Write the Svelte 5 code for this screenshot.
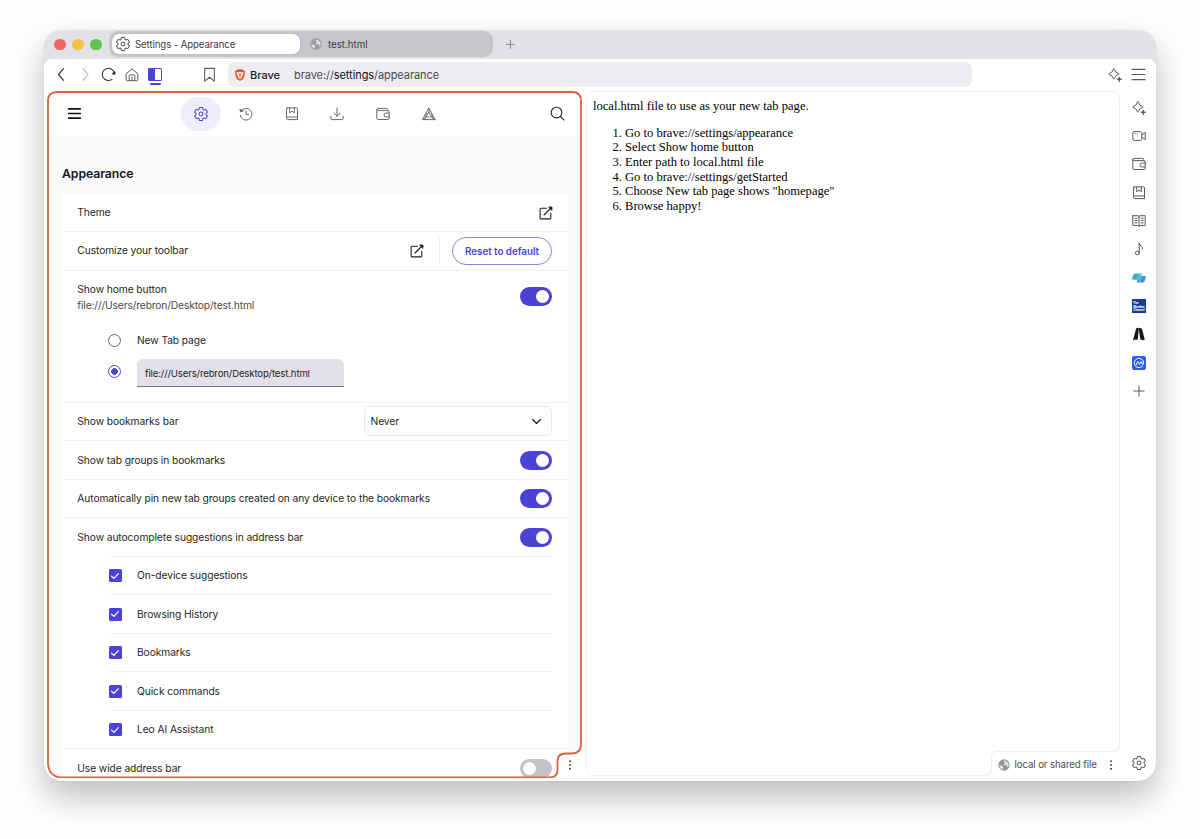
<script>
  const gear = 'M9.594 3.94c.09-.542.56-.94 1.11-.94h2.593c.55 0 1.02.398 1.11.94l.213 1.281c.063.374.313.686.645.87.074.04.147.083.22.127.325.196.72.257 1.075.124l1.217-.456a1.125 1.125 0 0 1 1.37.49l1.296 2.247a1.125 1.125 0 0 1-.26 1.431l-1.003.827c-.293.241-.438.613-.43.992a7.723 7.723 0 0 1 0 .255c-.008.378.137.75.43.991l1.004.827c.424.35.534.955.26 1.43l-1.298 2.247a1.125 1.125 0 0 1-1.369.491l-1.217-.456c-.355-.133-.75-.072-1.076.124a6.47 6.47 0 0 1-.22.128c-.331.183-.581.495-.644.869l-.213 1.281c-.09.543-.56.94-1.11.94h-2.594c-.55 0-1.019-.398-1.11-.94l-.213-1.281c-.062-.374-.312-.686-.644-.87a6.52 6.52 0 0 1-.22-.127c-.325-.196-.72-.257-1.076-.124l-1.217.456a1.125 1.125 0 0 1-1.369-.49l-1.297-2.247a1.125 1.125 0 0 1 .26-1.431l1.004-.827c.292-.24.437-.613.43-.991a6.932 6.932 0 0 1 0-.255c.007-.38-.138-.751-.43-.992l-1.004-.827a1.125 1.125 0 0 1-.26-1.43l1.297-2.247a1.125 1.125 0 0 1 1.37-.491l1.216.456c.356.133.751.072 1.076-.124.072-.044.146-.086.22-.128.332-.183.582-.495.644-.869l.214-1.28Z';
  const navItems = ['gear', 'history', 'book', 'download', 'wallet', 'rewards'];
  const sideItems = ['sparkle', 'video', 'wallet', 'book', 'reader', 'note', 'translate', 'weather', 'road', 'coin', 'plus'];
  const suggestions = ['On-device suggestions', 'Browsing History', 'Bookmarks', 'Quick commands', 'Leo AI Assistant'];
  const groupRows = [
    'Show tab groups in bookmarks',
    'Automatically pin new tab groups created on any device to the bookmarks',
    'Show autocomplete suggestions in address bar'
  ];
  const steps = [
    'Go to brave://settings/appearance',
    'Select Show home button',
    'Enter path to local.html file',
    'Go to brave://settings/getStarted',
    'Choose New tab page shows "homepage"',
    'Browse happy!'
  ];
</script>

{#snippet icon(name, size = 14)}
  <svg class="icon" width={size} height={size} viewBox="0 0 14 14" fill="none" stroke="currentColor" stroke-width="1" stroke-linecap="round" stroke-linejoin="round">
    {#if name === 'gear'}
      <g transform="translate(7 7) scale(.73) translate(-12 -12)" stroke-width="1.4"><path d={gear} /><circle cx="12" cy="12" r="2.600" /></g>
    {:else if name === 'history'}
      <path d="M2 4.200A5.900 5.900 0 1 1 1.200 8" /><path d="M7 4v3.400h2.600" /><path d="M1 2.500 1.500 4.800l2.300-.5Z" fill="currentColor" />
    {:else if name === 'book'}
      <path d="M2.200.9h9.600q.7 0 .7.7v11H2.700q-1.200 0-1.200-1.200V1.600q0-.7.7-.7Z" /><path d="M1.600 11q.2-1 1.200-1h9.600" /><path d="M4.700 1v4.800L7 4.200l2.300 1.600V1" />
    {:else if name === 'download'}
      <path d="M7 1v8M3.900 6.100 7 9.200l3.100-3.100M.8 9.300v2q0 1.300 1.300 1.300h9.800q1.300 0 1.300-1.300v-2" />
    {:else if name === 'wallet'}
      <path d="M11.600 3.600V2.400q0-1-1-1H2Q.8 1.400.8 2.600v8.600q0 1.300 1.300 1.300h9.800q1.300 0 1.300-1.300V5q0-1.400-1.300-1.400H2.200Q.8 3.600.8 2.500" /><path d="M13 6.100H9.600q-1.600 0-1.600 1.900t1.600 1.900H13" />
    {:else if name === 'rewards'}
      <path d="M7 1.500 13.200 12.600H.8Z" /><path d="M7 5.400 9.600 10H4.400ZM7 1.500v3.900M.9 12.500 4.400 10M13.100 12.500 9.600 10M4.600 6.500 2.700 12.500M9.400 6.500l1.900 6" stroke-width=".8" />
    {:else if name === 'sparkle'}
      <path d="M5.900.9q.5 0 .6.6.6 3.200 3.900 3.900.7.1.7.6t-.7.6Q7.100 7.300 6.500 10.500q-.1.6-.6.6t-.6-.6Q4.700 7.300 1.400 6.600.7 6.500.7 6t.7-.6Q4.700 4.700 5.300 1.500 5.400.9 5.900.9Z" /><path d="M11.300 9.400v3.800M9.400 11.300h3.800" stroke-width="1.500" />
    {:else if name === 'video'}
      <path d="M2.200 2.600h6.200q1.400 0 1.400 1.400v6q0 1.400-1.400 1.400H2.200Q.8 11.400.8 10V4Q.8 2.600 2.200 2.600ZM10 5.800l3.200-2.400v7.200L10 8.200" /><path d="M3.200 4.900h.3M5.300 4.900h.3" />
    {:else if name === 'reader'}
      <path d="M7 2.200v10M1.200 1.700h4.600Q7 1.700 7 2.700q0-1 1.200-1h5v9.800H8.200Q7 11.500 7 12.500q0-1-1.200-1H.8V1.700ZM2.800 4.200h2.300M2.800 6.500h2.300M2.800 8.800h2.300M9 4.200h2.300M9 6.500h2.300M9 8.800h2.300" />
    {:else if name === 'note'}
      <circle cx="5.300" cy="10.900" r="1.900" /><path d="M7.200 10.900V1q.2 2.300 2.100 3.100 1.900 1 1 3.100" />
    {:else if name === 'translate'}
      <path d="M3.400 2.400h6.500L8.200 8.800h-7Q-.1 8.800.2 7.300L1.200 4q.5-1.600 2.200-1.600Z" fill="#36b0ca" stroke="none" /><path d="M6.400 5h6.200q1.500 0 1.100 1.400l-1 3.500q-.5 1.600-2 1.600h-6Z" fill="#3c91d8" stroke="none" /><path d="m8.800 3-1.500 5-1.800.2L7 3.200ZM7 5.600h2.600L8 10.900" stroke="#a8dfdc" stroke-width=".5" />
    {:else if name === 'weather'}
      <rect width="14" height="14" fill="#173c96" stroke="none" />
      <g fill="#fff" stroke="none" font-family="Liberation Sans" font-weight="700" font-size="3.300"><text x="1" y="4.800">The</text><text x="1" y="8.600" textLength="11.500">Weather</text><text x="1" y="12.200" textLength="11.500">Channel</text></g>
    {:else if name === 'road'}
      <path d="M4.200 1.200 6.800.7 5.900 12.200 4.500 13l-.4-1-.7 1.200-.8-.9-.7 1H1Z" fill="#171717" stroke="none" /><path d="M6.500.7 9.800 1.500l3 11.100-2.300.8-.5-1-1.500.6Z" fill="#171717" stroke="none" />
    {:else if name === 'coin'}
      <rect width="14" height="14" rx="2.200" fill="#2d59ed" stroke="none" /><path d="M10.800 9.800A4.700 4.700 0 1 1 11.700 7q-.1 1.600-1 1.600-.8 0-.8-1.400 0-1.700-.7-1.700-.5 0-1 1.400L7.500 8.400 6.800 6.700q-.4-1.200-.8-1.200-.5 0-1 1.500L4.300 8.700" stroke="#fff" stroke-width="1" />
    {:else if name === 'plus'}
      <path d="M7 1.800v10.400M1.800 7h10.400" />
    {:else if name === 'menu'}
      <path d="M.9 2.200h12.200M.9 7h12.200M.9 11.800h12.200" />
    {:else if name === 'burger'}
      <path d="M1 2.700h12M1 7h12M1 11.300h12" stroke-width="1.600" stroke-linecap="butt" />
    {:else if name === 'search'}
      <circle cx="6.100" cy="6.100" r="5" /><path d="m9.800 9.800 3.300 3.300" />
    {:else if name === 'back'}
      <path d="M8.900 1.600 4.200 7l4.700 5.400" stroke-width="1.100" />
    {:else if name === 'forward'}
      <path d="m4.700 1.600 4.700 5.400-4.700 5.400" />
    {:else if name === 'reload'}
      <path d="M10.200 11.600A5.700 5.700 0 1 1 12.500 5.600" /><path d="M13 4.500v2.300l-2.300-.6Z" fill="currentColor" />
    {:else if name === 'home'}
      <path d="M1.200 5.600 7 1l5.800 4.600v6q0 1.100-1.100 1.100H2.300q-1.100 0-1.100-1.100ZM4.200 12.600V8.100q0-1.300 1.300-1.300h3q1.300 0 1.300 1.300v4.500M7 9v3.500" />
    {:else if name === 'bookmark'}
      <path d="M2.500 1.300h9v11.900L7 9.600l-4.500 3.600Z" />
    {:else if name === 'external'}
      <path d="M7.500 2.200H2.100q-1 0-1 1v8.700q0 1 1 1h8.700q1 0 1-1V7.300M5 9l7-7" stroke-width="1.100" /><path d="M9.800 1H13v3.200Z" fill="currentColor" stroke-width=".7" />
    {:else if name === 'chevron'}
      <path d="m3.400 5.200 3.600 3.600 3.600-3.600" stroke-width="1.200" />
    {:else if name === 'dots'}
      <path d="M7 2.600v.01M7 7v.01M7 11.400v.01" stroke-width="1.900" stroke-linecap="square" />
    {:else if name === 'check'}
      <path d="m3 7.300 2.700 2.500 5.300-5.500" stroke="#fff" stroke-width="1.400" />
    {:else if name === 'lion'}
      <path d="m4.300.4-1 1.100-1.200-.1L.9 3l.5 1.400-.3 1.400 1.700 5.500L7 13.900l4.200-2.600 1.700-5.500-.3-1.400.5-1.400-1.200-1.600-1.200.1-1-1.100Z" fill="#ed5533" stroke="none" /><path d="m3.300 3.600 2.200.3L7 3.600l1.500.3 2.200-.3.5 1.900-1.700 2.600.2 1.300L7 11.700l-2.700-2.300.2-1.300-1.700-2.600Z" fill="#fff" stroke="none" /><path d="m4.600 5.300 1.700.6L7 8.600l.7-2.700 1.700-.6M5.700 9.400 7 8.700l1.300.7" stroke="#ed5533" stroke-width=".9" />
    {:else if name === 'globe'}
      <circle cx="7" cy="7" r="6.600" fill="#929599" stroke="none" /><path d="M7.800 1.600q-1.500.7-1.200 1.900 1.700.1 1.500 1.500-1.700.5-1.500 2.200l3.200.2q1.300.7.6 2.200l2-.8q.9-4.900-4.600-7ZM1.500 7.300q2.200-.2 2.900 1 1.900 0 1.900 1.300-1.300.8-.9 2.700-3.500-1.200-3.900-5Z" fill="#e3e4e6" stroke="none" />
    {/if}
  </svg>
{/snippet}

<div class="window">
  <header class="tabs">
    <span class="light red"></span><span class="light yellow"></span><span class="light green"></span>
    <div class="group">
      <div class="tab active">{@render icon('gear', 14)}<span>Settings - Appearance</span></div>
      <div class="tab second">{@render icon('globe', 12)}<span>test.html</span></div>
    </div>
    <span class="new">{@render icon('plus', 11)}</span>
  </header>

  <div class="toolbar">
    <div class="buttons">
      <span class="dark">{@render icon('back', 15)}</span>
      <span class="dim">{@render icon('forward', 15)}</span>
      <span class="dark">{@render icon('reload', 15)}</span>
      <span>{@render icon('home', 14)}</span>
      <span class="split"><i></i></span>
    </div>
    <span class="mark">{@render icon('bookmark', 15)}</span>
    <div class="address">{@render icon('lion', 12)}<b>Brave</b><span class="url">brave://<em>settings</em>/appearance</span></div>
    <div class="right">{@render icon('sparkle', 14)}{@render icon('menu', 15)}</div>
  </div>

  <div class="content">
    <section class="settings">
      <nav>
        <span class="burger">{@render icon('burger', 15)}</span>
        <div class="nav-items">
          {#each navItems as n, i}<span class:selected={i === 0}>{@render icon(n, 14)}</span>{/each}
        </div>
        <span class="find">{@render icon('search', 15)}</span>
      </nav>
      <h1>Appearance</h1>
      <div class="card">
        <div class="row"><span>Theme</span>{@render icon('external', 14)}</div>
        <div class="row custom"><span>Customize your toolbar</span>{@render icon('external', 14)}<div class="reset"><button>Reset to default</button></div></div>
        <div class="home">
          <div class="home-top">
            <div><p>Show home button</p><p class="sub">file:///Users/rebron/Desktop/test.html</p></div>
            <span class="toggle"></span>
          </div>
          <div class="option"><span class="radio"></span><span>New Tab page</span></div>
          <div class="option file"><span class="radio on"></span><span class="input">file:///Users/rebron/Desktop/test.html</span></div>
        </div>
        <div class="row bar"><span>Show bookmarks bar</span><div class="select"><span>Never</span>{@render icon('chevron', 15)}</div></div>
        {#each groupRows as r}<div class="row"><span>{r}</span><span class="toggle"></span></div>{/each}
        <div class="checks">
          {#each suggestions as s}<div class="row check"><span class="box">{@render icon('check', 12)}</span><span>{s}</span></div>{/each}
        </div>
        <div class="row"><span>Use wide address bar</span><span class="toggle off"></span></div>
      </div>
      <span class="notch">{@render icon('dots', 12)}</span>
      <svg class="outline" width="536" height="688" viewBox="0 0 536 688" fill="none"><path d="M0 0H536V688H0ZM10 1Q1 1 1 10V671Q1 686.500 16 686.500H502Q510.500 686.500 510.500 679V670Q510.500 662.500 518.500 662.500H525Q534 662.500 534 653V10Q534 1 525 1Z" fill="#fff" /><path d="M10 1H525Q534 1 534 10V653Q534 662.500 525 662.500H518.500Q510.500 662.500 510.500 670V679Q510.500 686.500 502 686.500H16Q1 686.500 1 671V10Q1 1 10 1Z" stroke="#d2643f" stroke-width="1.800" /></svg>
    </section>

    <section class="page">
      <p>local.html file to use as your new tab page.</p>
      <ol>{#each steps as s}<li>{s}</li>{/each}</ol>
      <svg class="frame" width="535" height="687" viewBox="0 0 535 687" fill="none"><path d="M7 .5H526Q533.500.5 533.500 7V654Q533.500 660.500 526 660.500H411Q405.500 660.500 405.500 667V678Q405.500 684.500 399 684.500H7Q.5 684.500.5 678V7Q.5.5 7 .5Z" stroke="#f0eff2" /></svg>
      <div class="origin">{@render icon('globe', 12)}<span>local or shared file</span>{@render icon('dots', 12)}</div>
    </section>

    <aside>
      {#each sideItems as s}<span>{@render icon(s, 14)}</span>{/each}
      <span class="side-gear">{@render icon('gear', 14)}</span>
    </aside>
  </div>
</div>

<style>
  :global(body) { background: #fefefe; }
  :global(#app) { display: flow-root; height: 839px; overflow: hidden; }
  * { box-sizing: border-box; }
  p, h1, ol { margin: 0; }
  .icon { display: block; flex: none; }
  .window {
    width: 1112px; height: 751px; margin: 30px 44px 0; overflow: hidden;
    border-radius: 18px; background: #fff; color: #1e1f23;
    font: 10.250px/15px Inter, sans-serif; letter-spacing: -.090px;
    box-shadow: 0 0 1px rgba(0,0,0,.25), 0 16px 32px rgba(0,0,0,.25);
    display: flex; flex-direction: column;
  }
  .tabs { height: 36px; margin-bottom: -7px; background: #e2e1e6; display: flex; align-items: flex-start; padding-left: 10px; flex: none; }
  .light { width: 11.500px; height: 11.500px; border-radius: 50%; margin: 8.500px 6.500px 0 0; }
  .red { background: #ec6765; } .yellow { background: #eec644; } .green { background: #61c354; }
  .group { display: flex; width: 384px; height: 26px; margin-top: 1px; margin-left: 1px; background: #c6c5cb; border-radius: 9px; padding: 3px 2px 3px 3px; }
  .tab { width: 191px; display: flex; align-items: center; gap: 5px; padding-left: 8px; font-size: 9.650px; color: #3b3c42; }
  .tab .icon { color: #55565e; }
  .tab.active { width: 188px; padding-left: 4px; background: #fff; border-radius: 7px; box-shadow: 0 0 1px #888; }
  .tab.second { padding-left: 10px; gap: 6px; letter-spacing: .03px; }
  .tab.second .icon { opacity: .8; }
  .new { margin: 9px 0 0 12px; color: #777880; }
  .toolbar { position: relative; height: 32px; flex: none; display: flex; align-items: center; background: #fff; border-radius: 7px 7px 0 0; padding: 0 0 1px 10px; color: #5a5b63; }
  .buttons { display: flex; gap: 8.500px; width: 148px; align-items: center; }
  .dark { color: #35363b; } .dim { color: #b0b0b5; }
  .split { position: relative; width: 14px; height: 13px; border: 1px solid #4c45d6; border-radius: 1px; margin-left: 1px; }
  .split::before { content: ''; display: block; width: 6px; height: 11px; background: #4c45d6; }
  .split i { position: absolute; left: 1px; bottom: -5px; width: 11px; height: 2px; background: #4c45d6; border-radius: 1px; }
  .address { margin-left: 11px; width: 744px; height: 25px; border-radius: 7px; background: #eeedf2; display: flex; align-items: center; padding: 1px 0 0 6px; font-size: 11px; letter-spacing: -.080px; color: #494a51; }
  .address b { font-weight: 500; color: #202126; margin-left: 4px; letter-spacing: 0; }
  .url { margin-left: 14px; } .url em { font-style: normal; color: #101116; }
  .right { display: flex; align-items: center; gap: 9px; margin: 0 10px 0 auto; }
  .content { display: flex; height: 690px; flex: none; }
  .settings { position: relative; width: 539px; margin-left: 3px; height: 687px; flex: none; overflow: hidden; }
  nav { height: 45px; display: flex; align-items: center; padding: 0 0 0 19.500px; color: #66676e; }
  .burger { color: #111; width: 114.500px; }
  .nav-items { display: flex; gap: 5.600px; margin-left: -.300px; }
  .nav-items span { width: 40px; height: 34px; border-radius: 17px; display: flex; align-items: center; justify-content: center; }
  .nav-items .selected { background: #eeedfd; color: #4a43d5; }
  .find { margin-left: 101px; color: #222; }
  h1 { background: #fafafa; width: 534px; height: 56.500px; padding: 29px 0 0 15px; font-size: 12.300px; line-height: 17px; font-weight: 600; color: #151619; letter-spacing: -.120px; }
  .card { width: 534px; background: #fff; border: solid #fafafa; border-width: 0 13px 0 15px; }
  .row { height: 38.500px; display: flex; align-items: center; border-top: 1px solid #f1f1f3; padding: 1px 16px 0 15.300px; justify-content: space-between; }
  .card > .row:first-child { border-top-color: #f7f7f8; padding-right: 15.500px; }
  .custom { justify-content: flex-start; padding-top: 0; }
  .bar { padding-top: 0; }
  .custom > .icon { margin-left: auto; }
  .reset { border-left: 1px solid #eee; margin-left: 15px; padding-left: 12.500px; height: 27px; display: flex; align-items: center; }
  button { width: 100px; height: 28px; flex: none; border: 1px solid #8783e1; border-radius: 14px; background: #fff; color: #4a43d5; font: 600 9.900px Inter, sans-serif; letter-spacing: -.05px; padding: 0; }
  .home { height: 132px; border-top: 1px solid #f1f1f3; padding: 10px 16px 0 15.300px; }
  .home-top { display: flex; justify-content: space-between; align-items: center; height: 32px; line-height: 16px; }
  .sub { color: #47484f; letter-spacing: -.130px; }
  .toggle { width: 32px; height: 19px; border-radius: 10px; background: #4a43d5; display: flex; justify-content: flex-end; align-items: center; padding: 0 3px; flex: none; }
  .toggle::after { content: ''; width: 13px; height: 13px; border-radius: 50%; background: #fff; }
  .off { background: #c2c2c7; justify-content: flex-start; }
  .option { display: flex; align-items: center; gap: 16px; padding-left: 30.700px; height: 15px; margin-top: 20px; }
  .file { height: 28px; margin-top: 11.500px; }
  .radio { width: 13px; height: 13px; border: 1.500px solid #66676e; border-radius: 50%; flex: none; }
  .radio.on { border-color: #4a43d5; background: radial-gradient(#4a43d5 3px, #fff 3.600px); margin-top: -3px; }
  .input { width: 207px; height: 28px; background: #e3e0ea; border-bottom: 1px solid #77757f; border-radius: 6px 6px 0 0; padding-left: 8px; line-height: 29px; font-size: 9.550px; letter-spacing: -.120px; }
  .select { width: 188.500px; height: 30px; border: 1px solid #e8e8eb; border-radius: 6px; display: flex; align-items: center; justify-content: space-between; padding: 0 7px 0 6px; }
  .checks { margin: 0 16px 0 46.500px; }
  .check { padding: 1px 0 0; justify-content: flex-start; gap: 15.500px; }
  .box { width: 13px; height: 13px; border-radius: 1.500px; background: #4a43d5; display: flex; align-items: center; justify-content: center; }
  .notch { position: absolute; left: 511px; top: 663px; width: 28px; height: 24px; padding: 5px 0 0 6px; color: #222; z-index: 2; }
  .outline, .frame { position: absolute; left: 0; top: -.500px; pointer-events: none; }
  .outline path:first-child { fill-rule: evenodd; }
  .page { position: relative; width: 534px; padding: 8px 0 0 7px; font: 12.570px/14.600px "Liberation Serif", serif; letter-spacing: 0; color: #000; flex: none; }
  ol { margin-top: 12.200px; padding-left: 32px; }
  .origin { position: absolute; left: 411.500px; top: 666px; height: 15px; display: flex; align-items: center; white-space: nowrap; font: 9.700px Inter, sans-serif; letter-spacing: -.110px; color: #4b4c52; }
  .origin span { margin: 0 8px 0 5px; }
  .origin .icon:last-child { color: #222; }
  aside { width: 36px; display: flex; flex-direction: column; align-items: center; color: #5a5b63; padding: 9.500px 0 0 1px; gap: 14.350px; position: relative; }
  .side-gear { position: absolute; top: 665px; left: 11.500px; }
</style>
